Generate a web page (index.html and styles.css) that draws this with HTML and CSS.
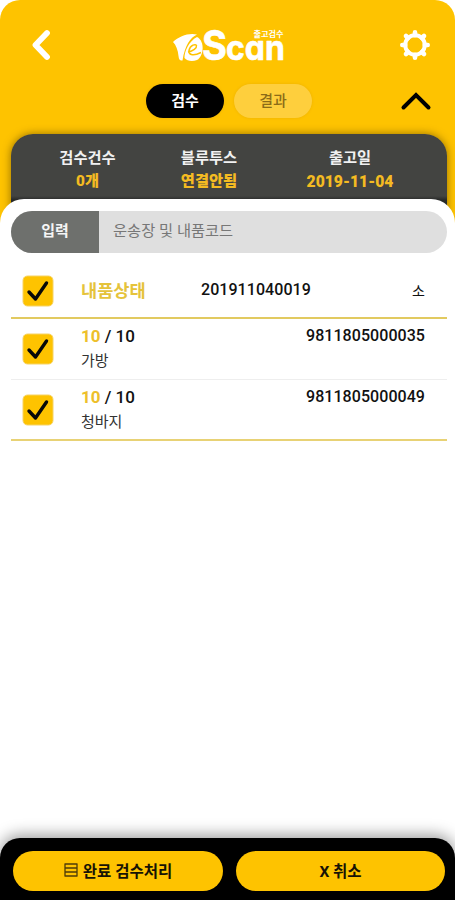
FILE: index.html
```html
<!DOCTYPE html>
<html lang="ko">
<head>
<meta charset="utf-8">
<title>eScan</title>
<link rel="stylesheet" href="styles.css">
</head>
<body>
<div class="app">
  <header class="topbar">
    <svg class="back" viewBox="0 0 22 32"><path d="M17 4 5.500 16 17 28" fill="none" stroke="#fff" stroke-width="5.800" stroke-linecap="round" stroke-linejoin="round"/></svg>
    <svg class="logo" viewBox="0 -10 116 60">
      <path d="M1 17C7 11 17 7.500 25 9.500C18 13 13 20 10.500 35.500C8 36 7 35 6.500 31C6 25 4 20 1 17Z" fill="#fff"/>
      <path d="M25 12C33 16 32 31 25 35C20 37 15 36 12.500 33C12 27 17 16 25 12Z" fill="#fff"/>
      <path d="M16 27C21 26 25 23 24.500 20.500C24 18.500 18 20 17 25.500C16.500 30.500 22 31 29 27.500" fill="none" stroke="#fec300" stroke-width="1.500"/>
      <text class="logo-word" y="35"><tspan class="cap" x="30" textLength="25" lengthAdjust="spacingAndGlyphs">S</tspan><tspan x="54" textLength="59" lengthAdjust="spacingAndGlyphs">can</tspan></text>
      <text class="logo-sub" x="81.500" y="12" textLength="30" lengthAdjust="spacingAndGlyphs">출고검수</text>
    </svg>
    <svg class="gear" viewBox="0 0 32 32">
      <g fill="none" stroke="#fff">
        <circle cx="16" cy="16" r="9.800" stroke-width="4"/>
        <path stroke-width="4.600" stroke-linecap="round" d="M16 3.300v3M16 25.700v3M3.300 16h3M25.700 16h3M7 7l2 2M23 23l2 2M25 7l-2 2M9 23l-2 2"/>
      </g>
    </svg>
  </header>
  <nav class="tabs">
    <span class="tab active">검수</span>
    <span class="tab">결과</span>
    <svg class="collapse" viewBox="0 0 32 20"><path d="M3.500 16.500 16 4 28.500 16.500" fill="none" stroke="#000" stroke-width="4" stroke-linecap="round"/></svg>
  </nav>
  <section class="summary">
    <div><p>검수건수</p><b>0개</b></div>
    <div><p>블루투스</p><b>연결안됨</b></div>
    <div><p>출고일</p><b class="date">2019-11-04</b></div>
  </section>
  <main class="sheet">
    <div class="search"><span class="label">입력</span><span class="field">운송장 및 내품코드</span></div>
    <div class="row head">
      <svg class="check" viewBox="0 0 32 32"><rect x="1" y="1" width="30" height="30" rx="4.500"/><path d="M7 17 13.500 24 24.500 8"/></svg>
      <span class="state">내품상태</span><span class="code">201911040019</span><span class="size">소</span>
    </div>
    <div class="row item">
      <svg class="check" viewBox="0 0 32 32"><rect x="1" y="1" width="30" height="30" rx="4.500"/><path d="M7 17 13.500 24 24.500 8"/></svg>
      <div class="info"><p class="count"><em>10</em> / 10</p><p class="name">가방</p></div>
      <span class="barcode">9811805000035</span>
    </div>
    <div class="row item last">
      <svg class="check" viewBox="0 0 32 32"><rect x="1" y="1" width="30" height="30" rx="4.500"/><path d="M7 17 13.500 24 24.500 8"/></svg>
      <div class="info"><p class="count"><em>10</em> / 10</p><p class="name">청바지</p></div>
      <span class="barcode">9811805000049</span>
    </div>
  </main>
  <footer class="actions">
    <button class="btn"><svg class="list" viewBox="0 0 14 14"><path d="M.5 1h13M.5 5h13M.5 9h13M.5 13h13M1 1v12M13 1v12" fill="none" stroke="#4d3c08" stroke-width="1.300"/></svg>완료 검수처리</button>
    <button class="btn">X 취소</button>
  </footer>
</div>
</body>
</html>
```

FILE: styles.css
```css
* { box-sizing: border-box; }
body { margin: 0; background: #fff; font-family: Roboto, "Noto Sans CJK KR", sans-serif; color: #111; }
p { margin: 0; }
.app { height: 900px; display: flex; flex-direction: column; overflow: hidden; border-radius: 20px 20px 0 0; background: linear-gradient(#fec300 0 300px, #fff 300px); }
.topbar { height: 84px; display: grid; grid-template-columns: 1fr 116px 1fr; align-items: center; padding: 6px 24px 0 30px; }
.back { width: 22px; height: 32px; }
.logo { width: 116px; height: 60px; margin-left: -1px; overflow: visible; }
.logo-word { font: 700 35px Inter, sans-serif; font-feature-settings: "cv11"; fill: #fff; stroke: #fff; stroke-width: .6; stroke-linejoin: round; }
.logo-word .cap { font-size: 41px; }
.logo-sub { font: 700 8px "Noto Sans CJK KR", sans-serif; fill: #fff; }
.gear { width: 32px; height: 32px; justify-self: end; }
.tabs { height: 50px; display: grid; grid-template-columns: 78px 78px 1fr; column-gap: 10px; padding: 0 23px 0 146px; align-items: start; }
.tab { height: 34px; border-radius: 17px; background: #fecf3d; color: #8c6c18; font-size: 15px; font-weight: 500; line-height: 34px; text-align: center; box-shadow: 0 0 3px rgba(170, 110, 0, .2); }
.tab.active { background: #000; color: #fff; font-weight: 700; }
.collapse { width: 32px; height: 20px; justify-self: end; margin-top: 7px; }
.summary { height: 87px; flex: none; margin: 0 8px 0 11px; padding: 13px 12px 0 11px; display: grid; grid-template-columns: 131px 112px 170px; text-align: center; background: linear-gradient(#434441 0 62px, #282a29 66px); border-radius: 22px 22px 0 0; box-shadow: 0 0 9px rgba(90, 65, 0, .65); color: #f1f1f1; font-size: 15.300px; font-weight: 700; line-height: 22px; }
.summary b { display: block; color: #f4bb22; font-size: 15.300px; line-height: 25px; }
.summary .date { font-size: 15.700px; }
.summary div { white-space: nowrap; }
.sheet { flex: 1; margin-top: -22px; padding: 12px 8px 0 11px; border-radius: 24px 24px 0 0; background: #fff; }
.search { height: 42px; display: flex; border-radius: 21px; overflow: hidden; background: #dfdfdf; line-height: 41px; margin-bottom: 9px; }
.label { width: 88px; background: #6e706d; color: #f5f5f5; font-size: 15px; font-weight: 700; text-align: center; }
.field { padding-left: 14px; color: #777; font-size: 15.300px; }
.row { display: flex; padding: 0 22px 0 11px; }
.check { width: 32px; height: 32px; flex: none; margin-right: 27px; }
.head .check { margin-top: 2px; }
.check rect { fill: #fec300; stroke: #f6d365; stroke-width: 1; }
.check path { fill: none; stroke: #080808; stroke-width: 3.400; stroke-linecap: round; stroke-linejoin: round; }
.head { height: 57px; align-items: center; border-bottom: 2px solid #e2ca60; }
.state { width: 120px; color: #e5c33b; font-size: 17.600px; font-weight: 700; }
.code, .barcode { font-size: 16px; font-weight: 500; letter-spacing: .06px; }
.size { margin-left: auto; font-size: 14px; }
.item { height: 61px; padding-top: 14px; border-bottom: 1px solid #eee; }
.info { flex: 1; margin-top: -8px; }
.count, .barcode { line-height: 22px; }
.count { font-size: 17px; font-weight: 500; }
.count em { font-style: normal; font-weight: 700; color: #edbf2b; }
.barcode { margin-top: -8px; }
.name { font-size: 15px; line-height: 24px; margin-top: 2px; color: #333; }
.last { border-bottom: 2px solid #e8d275; }
.actions { flex: none; height: 62px; display: grid; grid-template-columns: 210px 209px; column-gap: 13px; padding: 13px 0 0 13px; background: #000; border-radius: 20px 20px 0 0; box-shadow: 0 -3px 15px rgba(0, 0, 0, .4); }
.btn { height: 40px; padding: 0 0 3px; border: 0; border-radius: 20px; background: #fec300; color: #171305; font: 700 15.500px Roboto, "Noto Sans CJK KR", sans-serif; display: flex; align-items: center; justify-content: center; }
.list { width: 14px; height: 14px; margin-right: 5px; }
```
